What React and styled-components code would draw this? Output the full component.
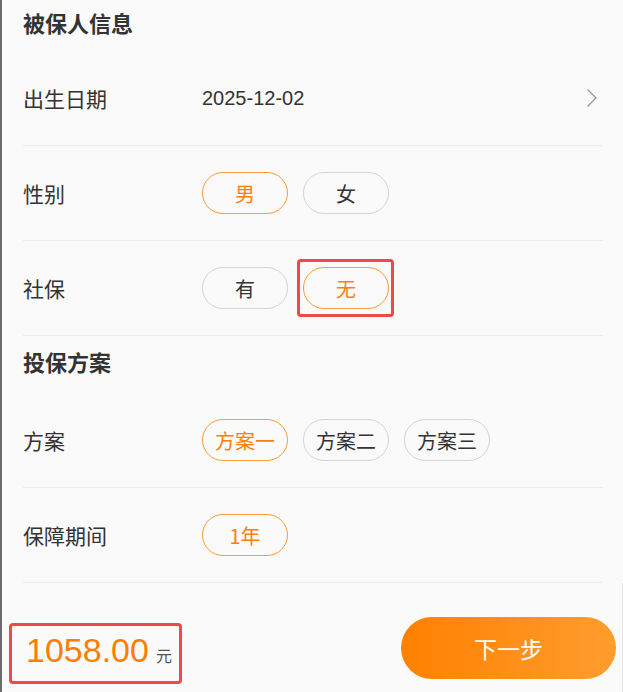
import React, { useState } from 'react';
import styled, { createGlobalStyle } from 'styled-components';

const GlobalStyle = createGlobalStyle`
	html, body {
		margin: 0;
		padding: 0;
		background: #fafafa;
	}
	body {
		font-family: 'Noto Sans CJK SC', 'Liberation Sans', sans-serif;
		color: #333;
	}
`;

const App = () => {
	const [gender, setGender] = useState('男');
	const [social, setSocial] = useState('无');
	const [plan, setPlan] = useState('方案一');

	return (
		<Page>
			<GlobalStyle />
			<SectionTitle $height={51}>被保人信息</SectionTitle>
			<Row>
				<Label>出生日期</Label>
				<DateValue>2025-12-02</DateValue>
				<Chevron viewBox='0 0 12 20' aria-hidden='true'>
					<path d='M1.5 1.5 L10 10 L1.5 18.5' />
				</Chevron>
			</Row>
			<Row>
				<Label>性别</Label>
				<Options>
					{['男', '女'].map((g) => (
						<Pill key={g} $active={gender === g} onClick={() => setGender(g)}>
							{g}
						</Pill>
					))}
				</Options>
			</Row>
			<Row>
				<Label>社保</Label>
				<Options>
					<Pill $active={social === '有'} onClick={() => setSocial('有')}>
						有
					</Pill>
					<Highlight>
						<Pill $active={social === '无'} onClick={() => setSocial('无')}>
							无
						</Pill>
					</Highlight>
				</Options>
			</Row>
			<SectionTitle $height={57}>投保方案</SectionTitle>
			<Row>
				<Label>方案</Label>
				<Options>
					{['方案一', '方案二', '方案三'].map((p) => (
						<Pill key={p} $active={plan === p} onClick={() => setPlan(p)}>
							{p}
						</Pill>
					))}
				</Options>
			</Row>
			<Row>
				<Label>保障期间</Label>
				<Options>
					<Pill $active>1年</Pill>
				</Options>
			</Row>
			<Footer>
				<PriceBox>
					<Price>1058.00</Price>
					<Unit>元</Unit>
				</PriceBox>
				<NextButton>下一步</NextButton>
			</Footer>
		</Page>
	);
};

export default App;

const Page = styled.div`
	min-height: 692px;
	box-sizing: border-box;
	border-left: 2px solid #6a6a6a;
	display: flex;
	flex-direction: column;
`;

const SectionTitle = styled.h2`
	margin: 0;
	height: ${(p) => p.$height}px;
	box-sizing: border-box;
	padding: 0 21px 8px;
	display: flex;
	align-items: center;
	font-size: 22px;
	font-weight: 700;
	color: #333;
	line-height: 1;
`;

const Row = styled.div`
	margin: 0 21px;
	height: 95px;
	box-sizing: border-box;
	border-bottom: 1px solid #ececec;
	display: flex;
	align-items: center;
`;

const Label = styled.div`
	width: 179px;
	flex-shrink: 0;
	font-size: 21px;
	color: #333;
`;

const DateValue = styled.div`
	flex: 1;
	font-family: 'Liberation Sans', Arial, sans-serif;
	font-size: 20px;
	color: #333;
`;

const Chevron = styled.svg`
	width: 12px;
	height: 20px;
	margin-right: 4px;
	fill: none;
	stroke: #9a9a9a;
	stroke-width: 1.4;
`;

const Options = styled.div`
	display: flex;
	align-items: center;
	gap: 15px;
`;

const Pill = styled.button`
	width: 86px;
	height: 42px;
	box-sizing: border-box;
	padding: 0;
	border-radius: 21px;
	border: 1px solid ${(p) => (p.$active ? '#ff9a33' : '#d4d4d4')};
	background: transparent;
	color: ${(p) => (p.$active ? '#ff7f0a' : '#333')};
	font-family: 'Noto Sans CJK SC', 'Liberation Sans', sans-serif;
	font-size: 20px;
	cursor: pointer;
`;

// red annotation frame around the selected option
const Highlight = styled.div`
	display: flex;
	padding: 5px 2px 5px 3px;
	margin: 0 -5px 0 -6px;
	border: 3px solid #f24848;
	border-radius: 4px;
`;

const Footer = styled.div`
	flex: 1;
	display: flex;
	justify-content: space-between;
	align-items: flex-start;
	padding: 34px 6px 0 7px;
	border-right: 1px solid #e6e6e6;
`;

const PriceBox = styled.div`
	margin-top: 6px;
	width: 173px;
	height: 61px;
	box-sizing: border-box;
	padding: 4px 0 0 14px;
	border: 3px solid #f24848;
	border-radius: 4px;
	display: flex;
	align-items: baseline;
`;

const Price = styled.span`
	font-family: 'Liberation Sans', Arial, sans-serif;
	font-size: 34px;
	line-height: 40px;
	color: #ff7d00;
`;

const Unit = styled.span`
	margin-left: 7px;
	font-size: 16px;
	color: #555;
`;

const NextButton = styled.button`
	width: 215px;
	height: 62px;
	border: none;
	border-radius: 31px;
	background: linear-gradient(90deg, #ff8000 0%, #ff9d2e 100%);
	color: #fff;
	font-family: 'Noto Sans CJK SC', 'Liberation Sans', sans-serif;
	font-size: 23px;
	cursor: pointer;
`;
